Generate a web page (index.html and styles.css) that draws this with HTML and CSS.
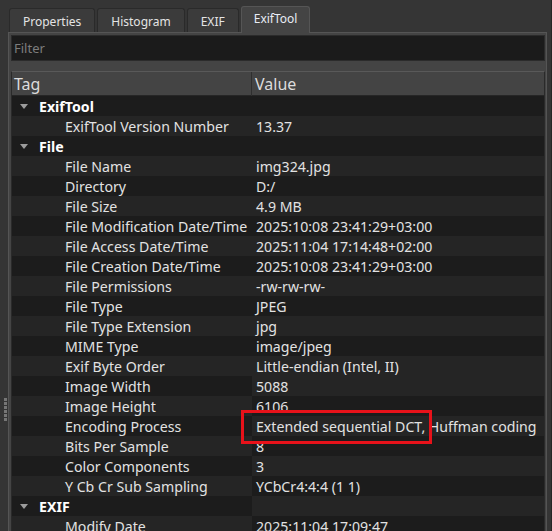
FILE: index.html
```html
<!DOCTYPE html>
<html>
<head>
<meta charset="utf-8">
<link rel="stylesheet" href="styles.css">
</head>
<body>
<div class="app">
  <div class="side">
    <div class="grip"><i></i><i></i><i></i><i></i><i></i><i></i></div>
  </div>
  <div class="main">
    <div class="tabs">
      <div class="tab">Properties</div>
      <div class="tab">Histogram</div>
      <div class="tab">EXIF</div>
      <div class="tab active">ExifTool</div>
    </div>
    <div class="panel">
      <div class="filter">Filter</div>
      <div class="tree">
        <div class="header">
          <div class="hcell tagh">Tag</div>
          <div class="hcell">Value</div>
        </div>
        <div class="rows">
          <div class="row group"><div class="tag"><span class="arrow"></span>ExifTool</div><div class="val"></div></div>
          <div class="row alt"><div class="tag">ExifTool Version Number</div><div class="val">13.37</div></div>
          <div class="row group"><div class="tag"><span class="arrow"></span>File</div><div class="val"></div></div>
          <div class="row alt"><div class="tag">File Name</div><div class="val">img324.jpg</div></div>
          <div class="row"><div class="tag">Directory</div><div class="val">D:/</div></div>
          <div class="row alt"><div class="tag">File Size</div><div class="val">4.9 MB</div></div>
          <div class="row"><div class="tag">File Modification Date/Time</div><div class="val">2025:10:08 23:41:29+03:00</div></div>
          <div class="row alt"><div class="tag">File Access Date/Time</div><div class="val">2025:11:04 17:14:48+02:00</div></div>
          <div class="row"><div class="tag">File Creation Date/Time</div><div class="val">2025:10:08 23:41:29+03:00</div></div>
          <div class="row alt"><div class="tag">File Permissions</div><div class="val">-rw-rw-rw-</div></div>
          <div class="row"><div class="tag">File Type</div><div class="val">JPEG</div></div>
          <div class="row alt"><div class="tag">File Type Extension</div><div class="val">jpg</div></div>
          <div class="row"><div class="tag">MIME Type</div><div class="val">image/jpeg</div></div>
          <div class="row alt"><div class="tag">Exif Byte Order</div><div class="val">Little-endian (Intel, II)</div></div>
          <div class="row"><div class="tag">Image Width</div><div class="val lite">5088</div></div>
          <div class="row alt"><div class="tag">Image Height</div><div class="val dark">6106</div></div>
          <div class="row"><div class="tag">Encoding Process</div><div class="val lite">Extended sequential DCT, Huffman coding</div></div>
          <div class="row alt"><div class="tag">Bits Per Sample</div><div class="val dark">8</div></div>
          <div class="row"><div class="tag">Color Components</div><div class="val lite">3</div></div>
          <div class="row alt"><div class="tag">Y Cb Cr Sub Sampling</div><div class="val dark">YCbCr4:4:4 (1 1)</div></div>
          <div class="row group"><div class="tag"><span class="arrow"></span>EXIF</div><div class="val lite"></div></div>
          <div class="row alt"><div class="tag">Modify Date</div><div class="val dark">2025:11:04 17:09:47</div></div>
        </div>
      </div>
    </div>
  </div>
</div>
<div class="mark"></div>
</body>
</html>
```
FILE: styles.css
```css
html, body {
  margin: 0;
  padding: 0;
  width: 552px;
  height: 531px;
  overflow: hidden;
  background: #353535;
  font-family: "Noto Sans", "Open Sans", sans-serif;
}
.app {
  display: flex;
  height: 531px;
}
.side {
  width: 8px;
  flex: none;
  padding-top: 398px;
  box-sizing: border-box;
}
.grip {
  display: flex;
  flex-direction: column;
  gap: 1px;
  margin-left: 4px;
}
.grip i {
  display: block;
  width: 3px;
  height: 3px;
  background: #767676;
}
.main {
  flex: 1;
  display: flex;
  flex-direction: column;
  padding-right: 4px;
  border-right: 1px solid #262626;
  box-sizing: border-box;
  min-width: 0;
}
.tabs {
  display: flex;
  align-items: flex-end;
  gap: 2px;
  height: 32px;
  padding-left: 1px;
  position: relative;
  z-index: 2;
}
.tab {
  height: 24px;
  box-sizing: border-box;
  padding: 3px 13px 0;
  background: #3b3b3b;
  border: 1px solid #2a2a2a;
  border-bottom: none;
  border-radius: 3px 3px 0 0;
  color: #e4e4e4;
  font-size: 12px;
  line-height: 19px;
}
.tab.active {
  height: 27px;
  margin-bottom: -1px;
  padding-top: 2px;
  padding-left: 12px;
  padding-right: 12px;
  background: #444444;
  border-color: #555555;
  color: #e8ecf4;
}
.panel {
  flex: 1;
  background: #444444;
  border: 1px solid #555555;
  border-bottom: none;
  padding: 2px 1px 0 2px;
  display: flex;
  flex-direction: column;
  min-height: 0;
}
.filter {
  height: 26px;
  box-sizing: border-box;
  background: #1b1b1b;
  border: 1px solid #2b2b2b;
  color: #7d7d7d;
  font-size: 13px;
  line-height: 25px;
  padding-left: 2px;
}
.tree {
  margin-top: 10px;
  border-top: 1px solid #595959;
  border-left: 1px solid #2a2a2a;
  border-right: 1px solid #2a2a2a;
  flex: 1;
  min-height: 0;
  overflow: hidden;
}
.header {
  display: grid;
  grid-template-columns: 240px 1fr;
  height: 23px;
  background: #444444;
  border-bottom: 1px solid #262626;
}
.hcell {
  color: #dcdcdc;
  font-size: 16px;
  line-height: 24px;
  padding-left: 3px;
}
.hcell.tagh {
  padding-left: 2px;
  border-right: 1px solid #2f2f2f;
}
.rows {
  display: flex;
  flex-direction: column;
}
.row {
  display: grid;
  grid-template-columns: 240px 1fr;
  height: 20px;
  background: #1c1c1c;
  color: #e2e2e2;
  font-size: 14.15px;
  line-height: 21px;
  white-space: nowrap;
}
.row.alt {
  background: #252525;
}
.tag {
  padding-left: 53px;
  overflow: hidden;
}
.val {
  padding-left: 4px;
  overflow: hidden;
}
.val.lite {
  background: #252525;
}
.val.dark {
  background: #1c1c1c;
}
.group .tag {
  padding-left: 8px;
  font-weight: bold;
  color: #ffffff;
  display: flex;
  align-items: center;
}
.arrow {
  width: 0;
  height: 0;
  border-left: 4.5px solid transparent;
  border-right: 4.5px solid transparent;
  border-top: 5px solid #9c9c9c;
  margin-right: 11px;
}
.mark {
  position: absolute;
  left: 241px;
  top: 410px;
  width: 191px;
  height: 34px;
  box-sizing: border-box;
  border: 3px solid #e8121a;
}
```
